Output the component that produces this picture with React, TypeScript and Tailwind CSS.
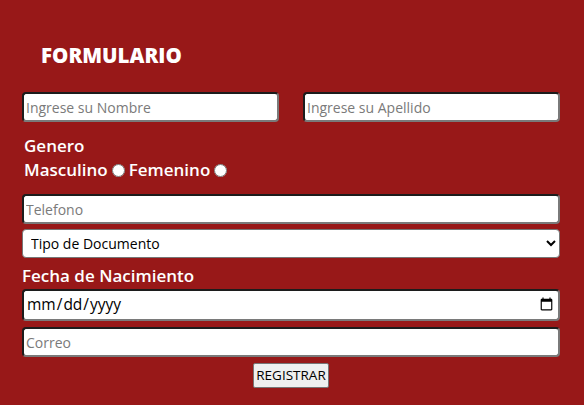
import React from "react";

const inputCls =
  "block w-full h-[30px] bg-white rounded-[4px] border-2 border-t-[#1c1c1c] border-l-[#1c1c1c] border-r-[#7a7a7a] border-b-[#7a7a7a] px-[2px] text-[14px] text-black placeholder:text-[#7a7a7a] outline-none";

export default function App() {
  return (
    <div
      className="w-[584px] h-[405px] bg-[#981818] text-white pl-[22px] pr-[24px] overflow-hidden"
      style={{ fontFamily: '"Open Sans", "Noto Sans", sans-serif' }}
    >
      <h1 className="pt-[40px] pl-[19px] h-[92px] text-[20.5px] font-extrabold leading-[30px]">
        FORMULARIO
      </h1>
      <div className="grid grid-cols-2 gap-[24px]">
        <input className={inputCls} placeholder="Ingrese su Nombre" />
        <input className={inputCls} placeholder="Ingrese su Apellido" />
      </div>
      <div className="mt-[13px] pl-[2px] text-[17px] font-semibold leading-[22px]">Genero</div>
      <div className="mt-[2px] pl-[2px] flex items-center text-[17px] font-semibold leading-[22px]">
        <span>Masculino</span>
        <input type="radio" name="g" className="ml-[4px] mr-[4px] w-[13px] h-[13px]" />
        <span>Femenino</span>
        <input type="radio" name="g" className="ml-[4px] w-[13px] h-[13px]" />
      </div>
      <input className={inputCls + " mt-[13px]"} placeholder="Telefono" />
      <select
        className="mt-[5px] block w-full h-[29px] bg-white rounded-[4px] border border-[#767676] pl-[4px] text-[14px] text-black outline-none"
        defaultValue=""
      >
        <option value="">Tipo de Documento</option>
      </select>
      <div className="mt-[7px] text-[17px] font-semibold leading-[22px]">Fecha de Nacimiento</div>
      <input
        type="date"
        className={inputCls + " h-[32px] text-[15.5px] mt-[2px]"}
      />
      <input className={inputCls + " mt-[6px]"} placeholder="Correo" />
      <div className="flex justify-center mt-[6px]">
        <button className="h-[25px] bg-[#efefef] border border-[#767676] rounded-[2px] px-[2px] text-[13.5px] text-black">
          REGISTRAR
        </button>
      </div>
    </div>
  );
}
